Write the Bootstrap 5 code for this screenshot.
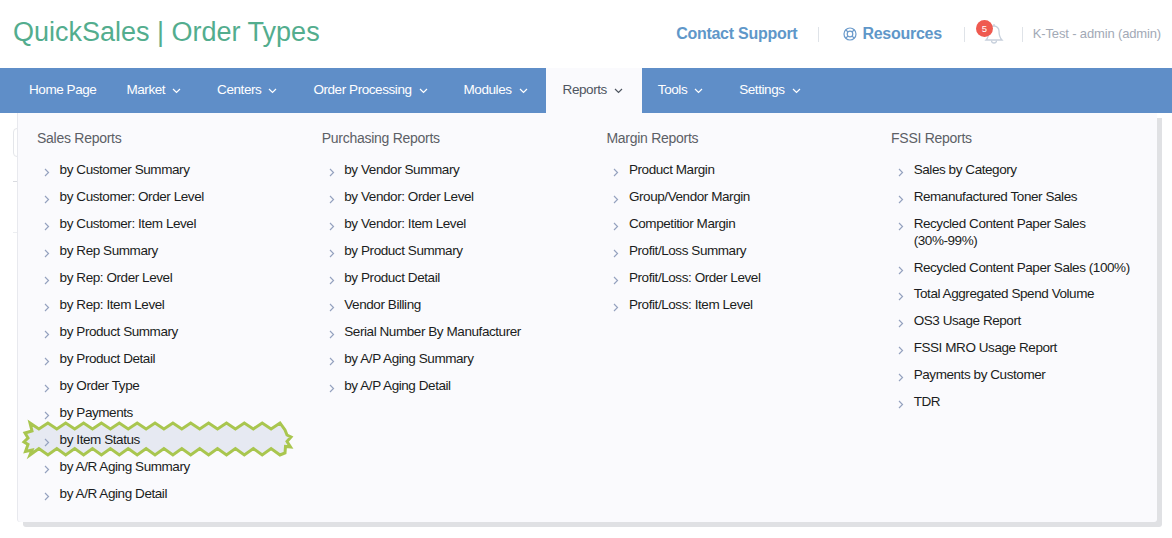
<!DOCTYPE html>
<html lang="en">
<head>
<meta charset="utf-8">
<title>QuickSales | Order Types</title>
<link href="https://cdn.jsdelivr.net/npm/bootstrap@5.3.0/dist/css/bootstrap.min.css" rel="stylesheet">
<style>
html,body{height:538px;overflow:hidden;background:#fff}
body{font-family:"Liberation Sans",Arial,sans-serif;font-size:13px;color:#212529}
.qs-top{height:68px;padding:0 11px 0 13px}
.qs-title{font-size:27px;line-height:32px;color:#53ad8e;margin:0 0 5px;font-weight:400}
.qs-link{font-size:16px;letter-spacing:-.27px;font-weight:700;color:#5f97c9;text-decoration:none;display:flex;align-items:center;gap:5px}
.qs-link:hover{color:#5f97c9}
.qs-sep{width:1px;height:15px;background:#dfe3e8}
.qs-sep-a{margin:0 24px 0 21px}
.qs-sep-b{margin:0 3px 0 22px}
.qs-sep-c{margin:0 10px 0 18px}
.qs-user{font-size:13px;letter-spacing:-.15px;color:#a2a9b6}
.qs-bell{width:20px;height:24px}
.qs-count{position:absolute;left:-8px;top:-2px;width:17px;height:17px;border-radius:50%;background:#ef5a50;color:#fff;font-size:9.500px;line-height:17px;text-align:center}
.qs-bar{height:45px;background:#5f8ec8;position:relative}
.qs-item{height:45px;color:#fff;font-size:13.500px;letter-spacing:-.43px;text-decoration:none;display:flex;align-items:center;gap:7px;padding:0 20px 0 16px}
.qs-item:hover{color:#fff}
.qs-home{padding:0 14px 0 29px}
.qs-mod{padding-right:18px}
.qs-item.qs-on{background:#fafafd;color:#4e5560;padding:0 19px 0 17px}
.qs-back{padding:15px 0 0 13px}
.qs-inp{width:40px;height:29px;border:1px solid #e4e6ea;border-radius:4px}
.qs-rule{width:40px;height:1px;background:#d9dbe0}
.qs-rule-a{margin-top:24px}
.qs-rule-b{margin-top:50px;background:#eceef1}
.qs-drop{position:absolute;left:18px;top:113px;width:1139px;height:409px;background:#fafafd;border-radius:0 0 3px 3px;box-shadow:5px 5px 0 #e0e1e4,-1px 0 0 #e8e9ee;padding:16px 0 0 19px;display:grid;grid-template-columns:repeat(4,284.700px);z-index:5}
.qs-head{font-size:14px;letter-spacing:-.27px;line-height:18px;color:#5c6066;margin:0 0 9px;font-weight:400}
.qs-links{list-style:none;margin:0;padding:0 30px 0 22.600px}
.qs-links li{position:relative;font-size:13.500px;letter-spacing:-.43px;line-height:17px;padding:5px 0;color:#1b1d21}
.qs-links li.qs-tight{padding-bottom:4px}
.qs-arrow{position:absolute;left:-15.600px;top:12px;width:6px;height:9px}
.qs-burst{position:absolute;left:-39.600px;top:-8px;width:280px;height:46px}
.qs-tx{position:relative}
</style>
</head>
<body>
<header class="qs-top d-flex align-items-center justify-content-between">
  <h1 class="qs-title">QuickSales | Order Types</h1>
  <div class="d-flex align-items-center">
    <a class="qs-link" href="#">Contact Support</a>
    <span class="qs-sep qs-sep-a"></span>
    <a class="qs-link" href="#"><svg width="14" height="14" viewBox="0 0 14 14" fill="none" stroke="#6a9acb" stroke-width="1.200"><circle cx="7" cy="7" r="6"/><circle cx="7" cy="7" r="2.800"/><path d="M2.800 2.800l2.200 2.200M11.200 2.800L9 5M2.800 11.200L5 9M11.200 11.200L9 9"/></svg>Resources</a>
    <span class="qs-sep qs-sep-b"></span>
    <span class="position-relative d-flex qs-bell ms-3"><svg viewBox="0 0 20 24" fill="none" stroke="#c7d0dc" stroke-width="1.300"><path d="M2 18c2-2 3-4 3-9a5 5 0 0 1 10 0c0 5 1 7 3 9z"/><path d="M10 2v2M7.500 18.500a2.500 2.500 0 0 0 5 0"/></svg><span class="qs-count">5</span></span>
    <span class="qs-sep qs-sep-c"></span>
    <span class="qs-user">K-Test - admin (admin)</span>
  </div>
</header>
<nav class="qs-bar d-flex" aria-label="Main">
  <a class="qs-item qs-home" href="#">Home Page</a>
  <a class="qs-item" href="#">Market <svg width="9" height="6" viewBox="0 0 9 6" fill="none" stroke="currentColor" stroke-width="1.200"><path d="M1 1l3.500 3.500L8 1"/></svg></a>
  <a class="qs-item" href="#">Centers <svg width="9" height="6" viewBox="0 0 9 6" fill="none" stroke="currentColor" stroke-width="1.200"><path d="M1 1l3.500 3.500L8 1"/></svg></a>
  <a class="qs-item" href="#">Order Processing <svg width="9" height="6" viewBox="0 0 9 6" fill="none" stroke="currentColor" stroke-width="1.200"><path d="M1 1l3.500 3.500L8 1"/></svg></a>
  <a class="qs-item qs-mod" href="#">Modules <svg width="9" height="6" viewBox="0 0 9 6" fill="none" stroke="currentColor" stroke-width="1.200"><path d="M1 1l3.500 3.500L8 1"/></svg></a>
  <a class="qs-item qs-on" href="#">Reports <svg width="9" height="6" viewBox="0 0 9 6" fill="none" stroke="currentColor" stroke-width="1.200"><path d="M1 1l3.500 3.500L8 1"/></svg></a>
  <a class="qs-item" href="#">Tools <svg width="9" height="6" viewBox="0 0 9 6" fill="none" stroke="currentColor" stroke-width="1.200"><path d="M1 1l3.500 3.500L8 1"/></svg></a>
  <a class="qs-item" href="#">Settings <svg width="9" height="6" viewBox="0 0 9 6" fill="none" stroke="currentColor" stroke-width="1.200"><path d="M1 1l3.500 3.500L8 1"/></svg></a>
</nav>
<main class="qs-back"><div class="qs-inp"></div><div class="qs-rule qs-rule-a"></div><div class="qs-rule qs-rule-b"></div></main>
<div class="qs-drop" id="drop"></div>
<script>
const cols=[["Sales Reports",["by Customer Summary","by Customer: Order Level","by Customer: Item Level","by Rep Summary","by Rep: Order Level","by Rep: Item Level","by Product Summary","by Product Detail","by Order Type","by Payments","by Item Status","by A/R Aging Summary","by A/R Aging Detail"]],
["Purchasing Reports",["by Vendor Summary","by Vendor: Order Level","by Vendor: Item Level","by Product Summary","by Product Detail","Vendor Billing","Serial Number By Manufacturer","by A/P Aging Summary","by A/P Aging Detail"]],
["Margin Reports",["Product Margin","Group/Vendor Margin","Competitior Margin","Profit/Loss Summary","Profit/Loss: Order Level","Profit/Loss: Item Level"]],
["FSSI Reports",["Sales by Category","Remanufactured Toner Sales","Recycled Content Paper Sales (30%-99%)","Recycled Content Paper Sales (100%)","Total Aggregated Spend Volume","OS3 Usage Report","FSSI MRO Usage Report","Payments by Customer","TDR"]]];
const top_=[],bot=[];
for(let i=0;i<=28;i++){const x=30+i*8.93;top_.push([x,i%2?429:423]);bot.push([x,i%2?448.5:455]);}
const right=[[285,430],[287,435],[291,437],[287,441.5],[290.500,447],[285.500,446.500],[285,453]];
const left=[[32,450],[25.500,451.500],[28,444.5],[24,442],[28,438],[25,433],[32,431]];
const pts=top_.concat(right,bot.reverse(),left);
const poly=pts.map(p=>p[0].toFixed(1)+','+p[1].toFixed(1)).join(' ');
const arrow='<svg class="qs-arrow" viewBox="0 0 6 9" fill="none" stroke="#95a2bf" stroke-width="1.200"><path d="M1 1l3.500 3.500L1 8"/></svg>';
document.getElementById('drop').innerHTML=cols.map(c=>'<section><h2 class="qs-head">'+c[0]+'</h2><ul class="qs-links">'+c[1].map(t=>{
 const hit=t==='by Item Status';
 const cls=t==='Recycled Content Paper Sales (100%)'?' class="qs-tight"':'';
 return '<li'+cls+'>'+(hit?'<svg class="qs-burst" viewBox="20 418 280 46"><polygon points="'+poly+'" fill="#e6e9f2" stroke="#a9c64f" stroke-width="3"/></svg>':'')+arrow+'<span class="qs-tx">'+t+'</span></li>';
}).join('')+'</ul></section>').join('');
</script>
</body>
</html>
